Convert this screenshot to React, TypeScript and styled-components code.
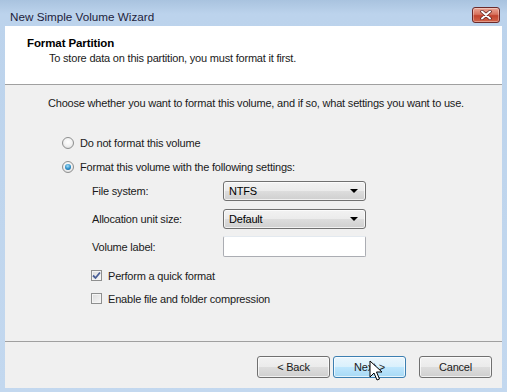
import React, { useState } from 'react';
import styled, { createGlobalStyle } from 'styled-components';

const GlobalStyle = createGlobalStyle`
  html, body {
    margin: 0;
    padding: 0;
    background: #bcd3ec;
  }
  * {
    box-sizing: border-box;
  }
`;

const Frame = styled.div`
  position: relative;
  width: 507px;
  height: 392px;
  background: linear-gradient(180deg, #a9c3df 0px, #bcd3ec 14px, #c3d8ef 100%);
  display: flex;
  flex-direction: column;
  font-family: 'Liberation Sans', Arial, sans-serif;
  font-size: 11px;
  letter-spacing: -0.2px;
  color: #000;
  overflow: hidden;
`;

const TitleBar = styled.div`
  height: 26px;
  display: flex;
  align-items: center;
  justify-content: space-between;
  padding: 0 7px 0 10px;
`;

const TitleText = styled.span`
  font-size: 11.7px;
  letter-spacing: 0;
  color: #1e1e3c;
  padding-top: 6px;
`;

const CloseButton = styled.div`
  width: 28px;
  height: 16px;
  margin-top: 4px;
  border: 1px solid #6b2a2a;
  border-radius: 3px;
  background: linear-gradient(180deg, #eba595 0%, #d8735e 45%, #c2432e 55%, #d2654a 100%);
  display: flex;
  align-items: center;
  justify-content: center;
  box-shadow: inset 0 0 0 1px rgba(255, 255, 255, 0.35);
`;

const Client = styled.div`
  margin: 0 5px;
  height: 362px;
  display: flex;
  flex-direction: column;
  background: #f0f0f0;
`;

const Header = styled.div`
  height: 59px;
  background: #fff;
  border-bottom: 1px solid #a0a0a0;
  padding: 10px 0 0 22px;
`;

const HeaderTitle = styled.div`
  font-weight: bold;
  font-size: 11.5px;
  letter-spacing: -0.1px;
  line-height: 15px;
`;

const HeaderSub = styled.div`
  line-height: 15px;
  padding-left: 22px;
  color: #1a1a1a;
`;

const Body = styled.div`
  flex: 1;
  padding: 11px 0 0 43px;
`;

const Intro = styled.div`
  line-height: 15px;
  color: #1a1a1a;
`;

const OptionList = styled.div`
  margin-top: 24px;
  padding-left: 14px;
  display: flex;
  flex-direction: column;
  gap: 9px;
`;

const Option = styled.label`
  display: flex;
  align-items: center;
  gap: 6px;
  height: 15px;
  color: #1a1a1a;
`;

const RadioDot = styled.span<{ checked: boolean }>`
  width: 12px;
  height: 12px;
  border-radius: 50%;
  border: 1px solid #8e8f8f;
  background: radial-gradient(circle at 50% 40%, #ffffff 0%, #f2f2f2 50%, #d2d2d2 100%);
  display: flex;
  align-items: center;
  justify-content: center;
  &::after {
    content: '';
    display: ${p => (p.checked ? 'block' : 'none')};
    width: 6px;
    height: 6px;
    border-radius: 50%;
    background: radial-gradient(circle at 45% 35%, #a8e0f8 0%, #2a8cc6 55%, #0b4f86 100%);
  }
`;

const Settings = styled.div`
  margin-top: 7px;
  padding-left: 44px;
  display: grid;
  grid-template-columns: 131px 143px;
  row-gap: 8px;
  align-items: center;
`;

const FieldLabel = styled.span`
  color: #1a1a1a;
`;

const Combo = styled.div`
  height: 20px;
  border: 1px solid #707070;
  border-radius: 3px;
  background: linear-gradient(180deg, #f2f2f2 0%, #ebebeb 50%, #dddddd 51%, #cfcfcf 100%);
  display: flex;
  align-items: center;
  justify-content: space-between;
  padding: 0 7px 0 5px;
  box-shadow: inset 0 0 0 1px rgba(255, 255, 255, 0.7);
`;

const Arrow = styled.span`
  width: 0;
  height: 0;
  border-left: 4px solid transparent;
  border-right: 4px solid transparent;
  border-top: 4px solid #000;
`;

const TextBox = styled.div`
  height: 21px;
  border: 1px solid #abadb3;
  border-top-color: #e3e9ef;
  border-radius: 2px;
  background: #fff;
  margin-top: -1px;
`;

const CheckList = styled.div`
  margin-top: 11px;
  padding-left: 43px;
  display: flex;
  flex-direction: column;
  gap: 8px;
`;

const CheckBox = styled.span`
  width: 11px;
  height: 11px;
  border: 1px solid #8e8f8f;
  background: linear-gradient(135deg, #dcdcdc 0%, #f6f6f6 100%);
  box-shadow: inset 0 0 0 1px #f4f4f4;
  display: flex;
  align-items: center;
  justify-content: center;
`;

const Footer = styled.div`
  height: 47px;
  border-top: 1px solid #a0a0a0;
  display: flex;
  align-items: flex-start;
  justify-content: flex-end;
  padding: 14px 10px 0 0;
`;

const ButtonGroup = styled.div`
  display: flex;
  gap: 3px;
  margin-right: 13px;
`;

const Button = styled.button<{ hot?: boolean }>`
  width: 73px;
  height: 22px;
  font-family: inherit;
  font-size: 11px;
  letter-spacing: -0.2px;
  color: #1a1a1a;
  border-radius: 3px;
  border: 1px solid ${p => (p.hot ? '#3c7fb1' : '#707070')};
  background: ${p =>
    p.hot
      ? 'linear-gradient(180deg, #eaf6fd 0%, #d9f0fc 50%, #bee6fd 51%, #a7d9f5 100%)'
      : 'linear-gradient(180deg, #f2f2f2 0%, #ebebeb 50%, #dddddd 51%, #cfcfcf 100%)'};
  box-shadow: inset 0 0 0 1px rgba(255, 255, 255, 0.7);
  padding: 0;
`;

const Cursor = styled.svg`
  position: absolute;
  left: 369px;
  top: 360px;
`;

const Check = () => (
  <svg width="9" height="9" viewBox="0 0 9 9">
    <path d="M1 4.5 L3.5 7 L8 1.5" fill="none" stroke="#4a5f97" strokeWidth="1.8" />
  </svg>
);

const App: React.FC = () => {
  const [mode, setMode] = useState<'none' | 'format'>('format');
  const [quick, setQuick] = useState(true);
  const [compress, setCompress] = useState(false);

  return (
    <Frame>
      <GlobalStyle />
      <TitleBar>
        <TitleText>New Simple Volume Wizard</TitleText>
        <CloseButton>
          <svg width="12" height="10" viewBox="0 0 12 10">
            <path d="M2 1.5 L10 8.5 M10 1.5 L2 8.5" stroke="#5a2020" strokeWidth="3.4" strokeLinecap="round" />
            <path d="M2 1.5 L10 8.5 M10 1.5 L2 8.5" stroke="#fff" strokeWidth="2" strokeLinecap="round" />
          </svg>
        </CloseButton>
      </TitleBar>
      <Client>
        <Header>
          <HeaderTitle>Format Partition</HeaderTitle>
          <HeaderSub>To store data on this partition, you must format it first.</HeaderSub>
        </Header>
        <Body>
          <Intro>Choose whether you want to format this volume, and if so, what settings you want to use.</Intro>
          <OptionList>
            <Option onClick={() => setMode('none')}>
              <RadioDot checked={mode === 'none'} />
              Do not format this volume
            </Option>
            <Option onClick={() => setMode('format')}>
              <RadioDot checked={mode === 'format'} />
              Format this volume with the following settings:
            </Option>
          </OptionList>
          <Settings>
            <FieldLabel>File system:</FieldLabel>
            <Combo>
              NTFS
              <Arrow />
            </Combo>
            <FieldLabel>Allocation unit size:</FieldLabel>
            <Combo>
              Default
              <Arrow />
            </Combo>
            <FieldLabel>Volume label:</FieldLabel>
            <TextBox />
          </Settings>
          <CheckList>
            <Option onClick={() => setQuick(!quick)}>
              <CheckBox>{quick && <Check />}</CheckBox>
              Perform a quick format
            </Option>
            <Option onClick={() => setCompress(!compress)}>
              <CheckBox>{compress && <Check />}</CheckBox>
              Enable file and folder compression
            </Option>
          </CheckList>
        </Body>
        <Footer>
          <ButtonGroup>
            <Button>&lt; Back</Button>
            <Button hot>Next &gt;</Button>
          </ButtonGroup>
          <Button>Cancel</Button>
        </Footer>
      </Client>
      <Cursor width="14" height="22" viewBox="0 0 14 22">
        <path d="M1 1 L1 17 L5 13 L8 20 L10.5 19 L7.5 12 L13 12 Z" fill="#fff" stroke="#000" strokeWidth="1" strokeLinejoin="round" />
      </Cursor>
    </Frame>
  );
};

export default App;
